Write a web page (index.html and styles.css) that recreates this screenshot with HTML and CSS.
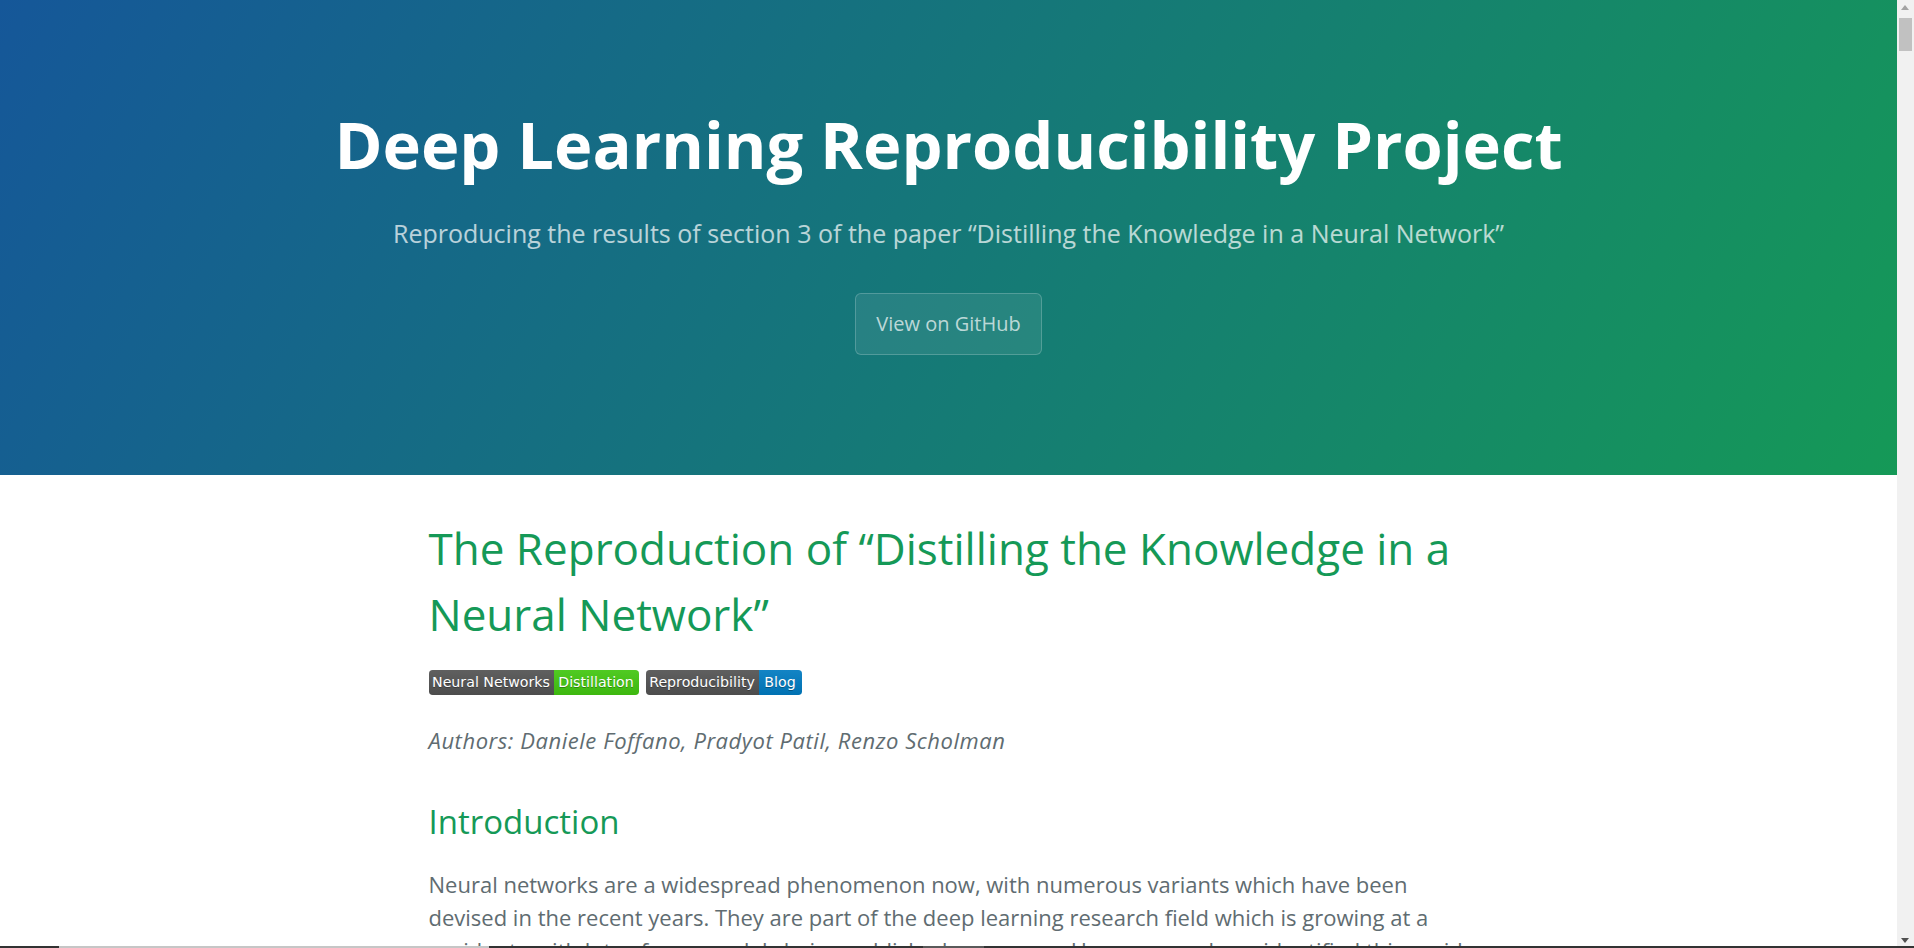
FILE: index.html
```html
<!DOCTYPE html>
<html lang="en">
<head>
<meta charset="UTF-8">
<title>Deep Learning Reproducibility Project</title>
<link rel="stylesheet" href="styles.css">
</head>
<body>
<section class="page-header">
  <h1 class="project-name">Deep Learning Reproducibility Project</h1>
  <h2 class="project-tagline">Reproducing the results of section 3 of the paper “Distilling the Knowledge in a Neural Network”</h2>
  <a href="#" class="btn">View on GitHub</a>
</section>
<section class="main-content">
  <h1 class="post-title">The Reproduction of “Distilling the Knowledge in a Neural Network”</h1>
  <p class="badges">
    <span class="badge"><span class="seg seg-label seg-nn">Neural Networks</span><span class="seg seg-green seg-dist">Distillation</span></span>
    <span class="badge"><span class="seg seg-label seg-rep">Reproducibility</span><span class="seg seg-blue seg-blog">Blog</span></span>
  </p>
  <p><em class="authors">Authors: Daniele Foffano, Pradyot Patil, Renzo Scholman</em></p>
  <h2>Introduction</h2>
  <p>Neural networks are a widespread phenomenon now, with numerous variants which have been devised in the recent years. They are part of the deep learning research field which is growing at a rapid rate with lots of new models being published every year. However, we have identified this rapid growth as a problem for the reproducibility of the published results, since many papers do not provide all the details needed to reproduce them.</p>
  <p>In this blog post we describe our attempt to reproduce the results of section 3 of the paper “Distilling the Knowledge in a Neural Network” by Hinton, Vinyals and Dean, in which a large teacher network transfers its knowledge to a smaller student network trained on the MNIST dataset.</p>
</section>
<div class="scrollbar" aria-hidden="true">
  <span class="sb-btn sb-up"></span>
  <span class="sb-track"><span class="sb-thumb"></span></span>
  <span class="sb-btn sb-down"></span>
</div>
<div class="bottom-strip"></div>
</body>
</html>
```
FILE: styles.css
```css
* {
  box-sizing: border-box;
}

html {
  font-size: 20px;
}

body {
  margin: 0;
  padding: 0 17px 0 0;
  font-family: "Open Sans", "Helvetica Neue", Helvetica, Arial, sans-serif;
  font-size: 20px;
  line-height: 1.5;
  color: #606c71;
  background: #fff;
}

a {
  color: #1e6bb8;
  text-decoration: none;
}

.page-header {
  color: #fff;
  text-align: center;
  background-color: #159957;
  background-image: linear-gradient(120deg, #155799, #159957);
  padding: 5rem 6rem;
}

.project-name {
  margin: 0;
  font-size: 3.25rem;
  font-weight: 700;
  line-height: 88px;
}

.project-tagline {
  margin: 27px 0 2rem;
  font-size: 1.25rem;
  font-weight: normal;
  line-height: 1.5;
  opacity: 0.7;
}

.btn {
  display: inline-block;
  margin-bottom: 1rem;
  padding: 0.75rem 1rem;
  color: rgba(255, 255, 255, 0.7);
  background-color: rgba(255, 255, 255, 0.08);
  border: 1px solid rgba(255, 255, 255, 0.2);
  border-radius: 0.3rem;
  font-size: 1rem;
  line-height: 1.5;
}

.main-content {
  max-width: 64rem;
  margin: 0 auto;
  padding: 2rem 6rem;
  font-size: 1.1rem;
  word-wrap: break-word;
  min-height: 25000px;
}

.main-content h1,
.main-content h2 {
  margin-top: 2rem;
  margin-bottom: 1rem;
  font-weight: normal;
  color: #159957;
  line-height: 1.5;
}

.main-content h1 {
  font-size: 2em;
}

.main-content h2 {
  font-size: 1.5em;
}

.main-content .post-title {
  margin-top: 0;
}

.main-content p {
  margin: 1em 0;
}

.authors {
  letter-spacing: 0.55px;
}

.main-content .badges {
  display: flex;
  gap: 7px;
  align-items: flex-start;
  height: 33px;
  padding-top: 3px;
  margin-top: 20px;
  margin-bottom: 24px;
}

.badge {
  display: flex;
  height: 25px;
  border-radius: 3.75px;
  overflow: hidden;
  font-family: "DejaVu Sans", Verdana, sans-serif;
  font-size: 14.2px;
  line-height: 25px;
  color: #fff;
  text-shadow: 0 1.25px 0 rgba(1, 1, 1, 0.3);
}

.seg {
  display: block;
  text-align: center;
  white-space: nowrap;
  background-image: linear-gradient(rgba(187, 187, 187, 0.1), rgba(0, 0, 0, 0.1));
}

.seg-label {
  background-color: #555;
}

.seg-green {
  background-color: #4c1;
}

.seg-blue {
  background-color: #007ec6;
}

.seg-nn {
  width: 125px;
}

.seg-dist {
  width: 85px;
}

.seg-rep {
  width: 113px;
}

.seg-blog {
  width: 43px;
}

.scrollbar {
  position: fixed;
  top: 0;
  right: 0;
  bottom: 0;
  width: 17px;
  display: flex;
  flex-direction: column;
  background: #f1f1f1;
}

.sb-btn {
  position: relative;
  display: block;
  height: 17px;
  flex: none;
}

.sb-btn::after {
  content: "";
  position: absolute;
  left: 4px;
  width: 0;
  height: 0;
  border-left: 4.5px solid transparent;
  border-right: 4.5px solid transparent;
}

.sb-up::after {
  top: 5px;
  border-bottom: 5px solid #a3a3a3;
}

.sb-down::after {
  top: 7px;
  border-top: 5px solid #505050;
}

.sb-track {
  display: block;
  flex: 1;
  padding: 1px 2px;
}

.sb-thumb {
  display: block;
  height: 33px;
  background: #c1c1c1;
}

.bottom-strip {
  position: fixed;
  left: 0;
  right: 0;
  bottom: 0;
  height: 2px;
  z-index: 2;
  background: linear-gradient(to right, #333 0, #333 59px, #c6c6c6 59px, #c6c6c6 489px, #333 489px, #333 923px, #5a5a5a 923px, #5a5a5a 984px, #333 984px, #333 100%);
}
```
